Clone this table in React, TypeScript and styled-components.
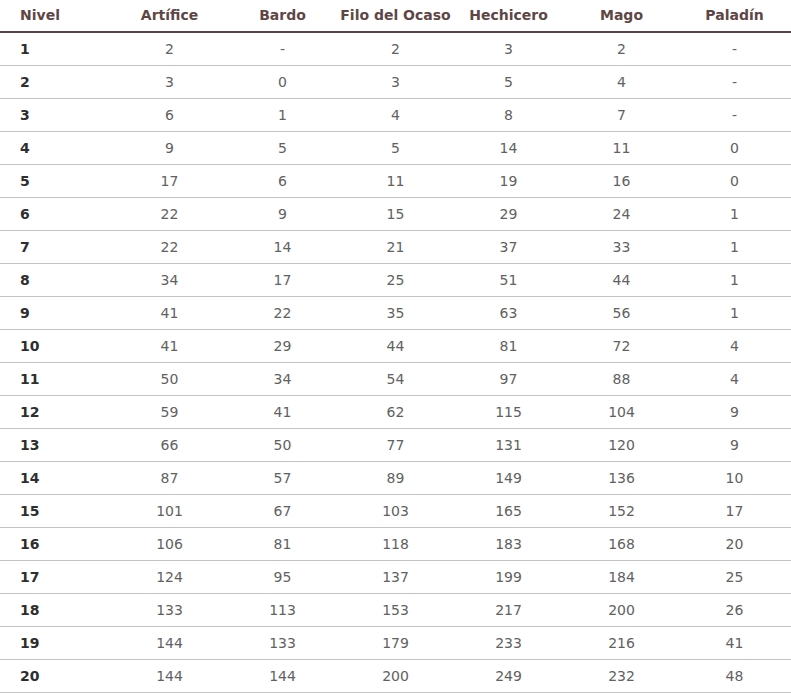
import React from "react";
import styled, { createGlobalStyle } from "styled-components";

const Global = createGlobalStyle`
  html, body { margin: 0; padding: 0; background: #ffffff; }
  body { font-family: "DejaVu Sans", "Liberation Sans", sans-serif; }
`;

const Table = styled.table`
  width: 791px;
  border-collapse: collapse;
  table-layout: fixed;
`;

const HeadCell = styled.th<{ $left?: boolean }>`
  width: 113px;
  height: 32px;
  padding: 0 0 1px ${(p) => (p.$left ? "20px" : "0")};
  text-align: ${(p) => (p.$left ? "left" : "center")};
  vertical-align: middle;
  font-size: 14px;
  font-weight: bold;
  color: #5e4646;
  border-bottom: 2px solid #5a4545;
  white-space: nowrap;
  box-sizing: border-box;
`;

const Row = styled.tr`
  height: 33px;
`;

const Cell = styled.td<{ $level?: boolean }>`
  height: 32px;
  padding: 0 0 0 ${(p) => (p.$level ? "20px" : "0")};
  text-align: ${(p) => (p.$level ? "left" : "center")};
  vertical-align: middle;
  font-size: 14px;
  font-weight: ${(p) => (p.$level ? "bold" : "normal")};
  color: ${(p) => (p.$level ? "#2e2e2e" : "#616161")};
  border-bottom: 1px solid #c4c4c4;
  box-sizing: border-box;
`;

const headers = ["Artífice", "Bardo", "Filo del Ocaso", "Hechicero", "Mago", "Paladín"];

const data: (string | number)[][] = [
  [2, "-", 2, 3, 2, "-"],
  [3, 0, 3, 5, 4, "-"],
  [6, 1, 4, 8, 7, "-"],
  [9, 5, 5, 14, 11, 0],
  [17, 6, 11, 19, 16, 0],
  [22, 9, 15, 29, 24, 1],
  [22, 14, 21, 37, 33, 1],
  [34, 17, 25, 51, 44, 1],
  [41, 22, 35, 63, 56, 1],
  [41, 29, 44, 81, 72, 4],
  [50, 34, 54, 97, 88, 4],
  [59, 41, 62, 115, 104, 9],
  [66, 50, 77, 131, 120, 9],
  [87, 57, 89, 149, 136, 10],
  [101, 67, 103, 165, 152, 17],
  [106, 81, 118, 183, 168, 20],
  [124, 95, 137, 199, 184, 25],
  [133, 113, 153, 217, 200, 26],
  [144, 133, 179, 233, 216, 41],
  [144, 144, 200, 249, 232, 48],
];

export default function App() {
  return (
    <>
      <Global />
      <Table>
        <thead>
          <tr>
            <HeadCell $left>Nivel</HeadCell>
            {headers.map((h) => (
              <HeadCell key={h}>{h}</HeadCell>
            ))}
          </tr>
        </thead>
        <tbody>
          {data.map((r, i) => (
            <Row key={i}>
              <Cell $level>{i + 1}</Cell>
              {r.map((v, j) => (
                <Cell key={j}>{v}</Cell>
              ))}
            </Row>
          ))}
        </tbody>
      </Table>
    </>
  );
}
